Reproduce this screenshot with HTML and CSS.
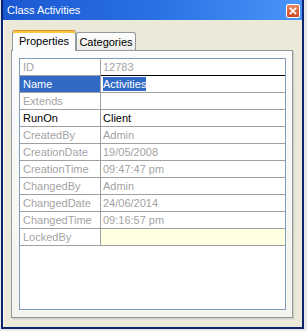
FILE: index.html
```html
<!DOCTYPE html>
<html>
<head>
<meta charset="utf-8">
<link rel="stylesheet" href="styles.css">
</head>
<body>
<div class="window">
  <div class="frame">
    <div class="titlebar">
      <span class="title">Class Activities</span>
      <span class="close">
        <svg width="14" height="14" viewBox="0 0 14 14"><path d="M4 4 L10 10 M10 4 L4 10" stroke="#fff" stroke-width="2" stroke-linecap="square"/></svg>
      </span>
    </div>
    <div class="client">
      <div class="tabs">
        <div class="tab active">Properties</div>
        <div class="tab">Categories</div>
      </div>
      <div class="panel">
        <div class="grid">
          <div class="row"><div class="k">ID</div><div class="v edit-top">12783</div></div>
          <div class="row"><div class="k sel">Name</div><div class="v"><span class="hl">Activities</span></div></div>
          <div class="row"><div class="k">Extends</div><div class="v"></div></div>
          <div class="row dark"><div class="k">RunOn</div><div class="v">Client</div></div>
          <div class="row"><div class="k">CreatedBy</div><div class="v">Admin</div></div>
          <div class="row"><div class="k">CreationDate</div><div class="v">19/05/2008</div></div>
          <div class="row"><div class="k">CreationTime</div><div class="v">09:47:47 pm</div></div>
          <div class="row"><div class="k">ChangedBy</div><div class="v">Admin</div></div>
          <div class="row"><div class="k">ChangedDate</div><div class="v">24/06/2014</div></div>
          <div class="row"><div class="k">ChangedTime</div><div class="v">09:16:57 pm</div></div>
          <div class="row"><div class="k">LockedBy</div><div class="v yellow"></div></div>
        </div>
      </div>
    </div>
  </div>
</div>
</body>
</html>
```
FILE: styles.css
```css
html, body {
  margin: 0;
  padding: 0;
  background: #ece9d8;
}
body {
  font-family: "Liberation Sans", Arial, sans-serif;
  font-size: 11px;
}
.window {
  width: 307px;
  height: 331px;
  box-sizing: border-box;
  border-left: 1px solid #e8e8e8;
  border-right: 3px solid #e8e8e8;
  border-bottom: 2px solid #e8e8e8;
  background: #ece9d8;
}
.frame {
  height: 100%;
  box-sizing: border-box;
  border-left: 2px solid #0a2470;
  border-right: 2px solid #0a2470;
  border-bottom: 2px solid #0a2470;
  display: flex;
  flex-direction: column;
}
.titlebar {
  height: 20px;
  flex: none;
  background: linear-gradient(to right, #1a58d2 0%, #2a70e4 50%, #4a95f7 100%);
  display: flex;
  align-items: center;
  justify-content: space-between;
  padding: 0 2px 0 4px;
  box-sizing: border-box;
}
.title {
  color: #fff;
  font-size: 11px;
  line-height: 13px;
  padding-top: 1px;
}
.close {
  width: 14px;
  height: 14px;
  box-sizing: border-box;
  border: 1px solid #fff;
  border-radius: 2px;
  background: linear-gradient(#e88a64, #c9441c);
  display: flex;
  align-items: center;
  justify-content: center;
  margin-top: 2px;
}
.close svg {
  width: 12px;
  height: 12px;
}
.client {
  flex: 1;
  background: #ece9d8;
  border-left: 1px solid #f7f6f0;
  padding: 10px 9px 9px 7px;
  display: flex;
  flex-direction: column;
}
.tabs {
  height: 20px;
  display: flex;
  align-items: flex-end;
  padding-left: 1px;
}
.tab {
  box-sizing: border-box;
  height: 18px;
  width: 60px;
  border: 1px solid #919b9c;
  border-bottom: none;
  border-radius: 3px 3px 0 0;
  background: linear-gradient(#ffffff, #ecebe6);
  color: #000;
  line-height: 15px;
  padding-top: 2px;
  text-align: center;
}
.tab.active {
  position: relative;
  z-index: 1;
  width: 64px;
  height: 21px;
  margin-bottom: -1px;
  border-top: 1px solid #e68b2c;
  box-shadow: inset 0 2px 0 #ffc73c;
  background: #fcfcfe;
  line-height: 14px;
  padding-top: 3px;
}
.panel {
  height: 268px;
  box-sizing: border-box;
  border: 1px solid #919b9c;
  background: linear-gradient(#fcfcfe, #f4f3ee);
  box-shadow: 1px 1px 0 #d0cec2, 2px 2px 0 #e2e0d4;
  padding: 7px 6px 7px 7px;
}
.grid {
  height: 100%;
  box-sizing: border-box;
  border: 1px solid #7f9db9;
  background: #fff;
}
.row {
  display: flex;
  height: 17px;
  color: #a3a3a3;
}
.row.dark {
  color: #000;
}
.k {
  width: 81px;
  box-sizing: border-box;
  border-right: 1px solid #a0a0a0;
  border-bottom: 1px solid #a0a0a0;
  padding-left: 3px;
  line-height: 16px;
  white-space: nowrap;
  overflow: hidden;
}
.k.sel {
  background: #316ac5;
  color: #fff;
}
.v {
  flex: 1;
  border-bottom: 1px solid #a0a0a0;
  padding-left: 2px;
  line-height: 16px;
  white-space: nowrap;
}
.v.edit-top {
  border-bottom-color: #000;
}
.v.yellow {
  background: #ffffe1;
}
.hl {
  background: #316ac5;
  color: #fff;
  padding: 1px 0;
}
```
